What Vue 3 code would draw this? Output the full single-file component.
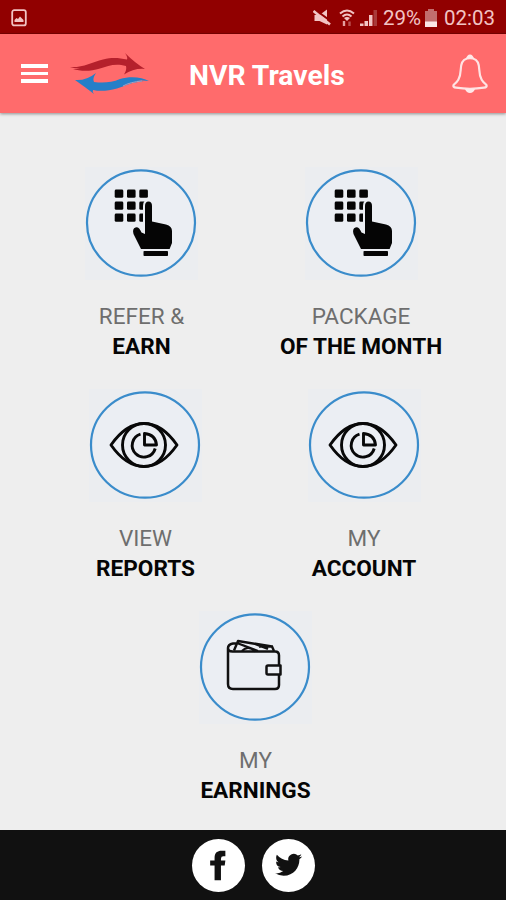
<template>
  <div class="screen">
    <!-- Android status bar -->
    <div class="status-bar">
      <svg class="status-picture" width="16" height="18" viewBox="0 0 16 18">
        <rect x="1.2" y="1.2" width="13.6" height="15.2" rx="2" fill="none" stroke="#f2c4c4" stroke-width="1.8" />
        <path d="M3.5 13V11l2-2 1.5 1 2-2.5 3.5 3.5V13z" fill="#f2c4c4" />
      </svg>
      <div class="status-right">
        <svg class="mute" width="18" height="18" viewBox="0 0 18 18">
          <path d="M1.5 6h5l7.5-5.5v15l-7.5-3.5h-5z" fill="#f2c4c4" />
          <path d="M1 0l18 13" stroke="#910000" stroke-width="2" />
          <path d="M0.5 2l16.5 13.5" stroke="#f2c4c4" stroke-width="2.6" />
        </svg>
        <svg class="wifi" width="16" height="18" viewBox="0 0 16 18">
          <path d="M1 4.5Q8-1.500 15 4.500M3.500 7.500Q8 3.500 12.500 7.500" fill="none" stroke="#f2c4c4" stroke-width="2" />
          <path d="M5 9q3-2 6 0l-3 3z" fill="#f2c4c4" />
          <path d="M5 12v5" stroke="#e4a0a0" stroke-width="2.4" fill="none" />
          <path d="M10.500 17v-4.500" stroke="#b95050" stroke-width="2.4" fill="none" />
        </svg>
        <svg class="signal" width="18" height="18" viewBox="0 0 18 18">
          <path d="M0 17v-2.500h3.500V17zM4.500 17v-5h3.500v5zM9 17V6h3.500v11z" fill="#f2c4c4" />
          <path d="M13.500 17V1H17v16z" fill="#a83a3a" />
        </svg>
        <span class="percent">29%</span>
        <svg class="battery" width="12" height="18" viewBox="0 0 12 18">
          <path d="M3 0h6v2h3v11H0V2h3z" fill="#c26d6d" />
          <path d="M0 12.500h12V18H0z" fill="#fbe6e6" />
        </svg>
        <span class="clock">02:03</span>
      </div>
    </div>

    <!-- App bar -->
    <header class="app-bar">
      <button class="menu" aria-label="Menu">
        <i></i><i></i><i></i>
      </button>
      <svg class="logo" width="80" height="42" viewBox="0 0 80 42">
        <path d="M0 14C12 15 22 9.500 33 6.500C43 4 49 5 57 6.500Q58 4 55 0Q65 10 75 16Q64 15 54 21.500Q57 17 56 13C45 10 38 13 30 15.500C19 19 10 18 3 16Q7 16 10 15.500Q5 15.500 0 14z" fill="#b5202c" />
        <path d="M5 27Q16 28 26 20Q22 26 24 29C32 30 41 30 50 26C60 23 72 24 79 28Q72 27 66 28Q71 28 75 29C63 28 56 33 47 35.500C38 38 30 38.500 23 37Q22 39 24 41Q15 34 5 27z" fill="#247fc8" />
        <path d="M53 33Q60 29 72 28" fill="none" stroke="#a2a1c2" stroke-width="1" />
      </svg>
      <h1>NVR Travels</h1>
      <svg class="bell" width="36" height="40" viewBox="0 0 36 40">
        <path d="M15 4.500C10 6 9 10 8.700 16C8.300 25 5 28 2 30.500C0.500 32.500 2 33.500 4 33.700Q18 36 32 33.700C34 33.500 35.500 32.500 34 30.500C31 28 27.700 25 27.300 16C27 10 26 6 21 4.500Q18 3.600 15 4.500z" fill="none" stroke="#ffe3e3" stroke-width="2.2" />
        <path d="M14 5Q15 0.500 18 0.500T22 5Q18 3 14 5zM13 35h10q-1.500 4-5 4t-5-4z" fill="#ffe9e9" />
      </svg>
    </header>

    <main>
      <div v-for="(row, i) in rows" :key="i" class="row" :class="'row-' + (i + 1)">
        <div v-for="tile in row" :key="tile.bold" class="tile">
          <div class="tile-image">
            <svg width="113" height="113" viewBox="0 0 113 113">
              <ellipse cx="56" cy="56" rx="54" ry="52.7" fill="#ebeef3" stroke="#3a8ccb" stroke-width="2.2" />

              <g v-if="tile.icon === 'touch'">
                <g fill="#050505">
                  <rect v-for="n in 9" :key="n" :x="29.7 + ((n - 1) % 3) * 12.3" :y="22.5 + Math.floor((n - 1) / 3) * 12" width="8.6" height="8.3" rx="1.4" />
                </g>
                <path d="M60 62V39q0-4.500 3.500-4.500T67 39v15.500l14 3q6 1.500 6 6.500v12l-4 10H58L48.500 67q-1.500-5.500 2-6.500t6 5l3.500 1.500z" fill="#050505" stroke="#ebeef3" stroke-width="4" paint-order="stroke" />
                <path d="M56 82h30v8H56z" fill="#ebeef3" />
                <rect x="58.5" y="84" width="24.5" height="5" rx="0.8" fill="#050505" />
              </g>

              <g v-else-if="tile.icon === 'eye'" fill="none" stroke="#080808" stroke-width="2.9" stroke-linejoin="round">
                <path d="M22 56Q37 34.500 55 34.500T88 56Q73 77.500 55 77.500T22 56z" />
                <circle cx="55" cy="56" r="21.5" />
                <path d="M51.500 45.200A11.700 11.700 0 1 0 66.200 59.500" />
                <path d="M55.500 44.500V56H67.500Q66.500 45.500 55.500 44.500z" />
              </g>

              <g v-else fill="none" stroke="#111" stroke-width="2.5" stroke-linejoin="round">
                <path d="M29 37V73q0 5 5 5H76q4 0 4-4V44.500q0-4-4-4H33.500q-4.500 0-4.500-3.500t5-4.500H37" />
                <path d="M35 39.500L39 30L73 35.500L75 40M38 32L59 40M43 40Q49 33.500 56 40.500M56 33L69 38M74 35.500H60" stroke-width="2.4" />
                <path d="M69 54.500h12.500v9H69q-1.500 0-1.500-1.500v-6q0-1.500 1.500-1.500z" fill="#ebeef3" />
              </g>
            </svg>
          </div>
          <div class="label">{{ tile.light }}</div>
          <div class="label bold">{{ tile.bold }}</div>
        </div>
      </div>
    </main>

    <footer>
      <a class="social" aria-label="Facebook">
        <svg width="53" height="53" viewBox="0 0 54 54">
          <path d="M23 42V27h-4.500v-5H23v-3C23 14 26 12 30 12h4v5.500H32q-2.500 0-2.500 2.500v2H34l-.7 5h-3.800v15z" fill="#111" />
        </svg>
      </a>
      <a class="social" aria-label="Twitter">
        <svg width="53" height="53" viewBox="0 0 54 54">
          <path transform="translate(13.3 12.5) scale(1.15)" d="M23.950 4.570a10 10 0 0 1-2.820.77 4.960 4.960 0 0 0 2.160-2.720c-.95.560-2 .960-3.130 1.180a4.920 4.920 0 0 0-8.380 4.480C7.690 8.090 4.070 6.130 1.640 3.160a4.820 4.820 0 0 0-.67 2.480c0 1.710.87 3.210 2.190 4.100a4.900 4.900 0 0 1-2.230-.62v.06a4.920 4.920 0 0 0 3.950 4.830 5 5 0 0 1-2.210.08 4.940 4.940 0 0 0 4.600 3.420A9.870 9.870 0 0 1 0 19.540a13.990 13.990 0 0 0 7.560 2.210c9.050 0 14-7.500 14-13.980 0-.21 0-.42-.02-.63a9.940 9.940 0 0 0 2.460-2.550z" fill="#111" />
        </svg>
      </a>
    </footer>
  </div>
</template>

<script setup>
const rows = [
  [
    { icon: 'touch', light: 'REFER &', bold: 'EARN' },
    { icon: 'touch', light: 'PACKAGE', bold: 'OF THE MONTH' }
  ],
  [
    { icon: 'eye', light: 'VIEW', bold: 'REPORTS' },
    { icon: 'eye', light: 'MY', bold: 'ACCOUNT' }
  ],
  [{ icon: 'wallet', light: 'MY', bold: 'EARNINGS' }]
]
</script>

<style>
body {
  margin: 0;
}
</style>

<style scoped>
.screen {
  display: flex;
  flex-direction: column;
  width: 506px;
  height: 900px;
  overflow: hidden;
  background: #eee;
  font-family: Roboto, "Liberation Sans", sans-serif;
}

.status-bar {
  display: flex;
  align-items: center;
  justify-content: space-between;
  box-sizing: border-box;
  flex: none;
  height: 34px;
  padding: 2px 11px 0;
  background: #910000;
  border-bottom: 1px solid #7c0000;
}

.status-right {
  display: flex;
  align-items: center;
  color: #f2c4c4;
  font-size: 20.5px;
  line-height: 32px;
}

.wifi {
  margin-left: 8px;
}

.signal {
  margin-left: 5px;
}

.percent {
  margin-left: 5px;
}

.battery {
  margin: 0 7px 0 4px;
}

.app-bar {
  display: flex;
  align-items: center;
  box-sizing: border-box;
  flex: none;
  height: 79px;
  padding: 0 18px 0 21px;
  background: #ff6b6c;
  box-shadow: 0 1px 3px rgba(0, 0, 0, 0.4);
}

.menu {
  display: flex;
  flex-direction: column;
  gap: 4px;
  width: 27px;
  padding: 0;
  border: 0;
  background: none;
}

.menu i {
  height: 3.6px;
  background: #fff;
}

.logo {
  margin-left: 22px;
}

h1 {
  flex: 1;
  margin: 4px 0 0 39px;
  color: #fff;
  font-size: 28.3px;
  font-weight: 700;
  line-height: 34px;
}

main {
  flex: none;
  box-sizing: border-box;
  height: 717px;
  padding-top: 54px;
}

.row {
  display: flex;
  box-sizing: border-box;
  height: 222px;
}

.row-1 {
  padding-left: 32px;
}

.row-2 {
  padding-left: 36px;
}

.row-3 {
  padding-left: 146px;
}

.tile {
  display: flex;
  flex-direction: column;
  align-items: center;
  width: 219px;
}

.row-1 .tile + .tile {
  width: 220px;
}

.row-2 .tile + .tile {
  width: 218px;
}

.tile-image {
  width: 113px;
  height: 113px;
  margin-bottom: 21px;
  background: #ebedf0;
}

.tile-image svg {
  display: block;
}

.label {
  color: #6e6e6e;
  font-size: 22.5px;
  font-weight: 400;
  line-height: 30px;
  white-space: nowrap;
}

.label.bold {
  color: #050505;
  font-size: 22.6px;
  font-weight: 700;
  line-height: 31px;
}

footer {
  display: flex;
  align-items: center;
  justify-content: center;
  gap: 17px;
  box-sizing: border-box;
  height: 70px;
  padding-left: 1px;
  background: #111;
}

.social {
  width: 53px;
  height: 53px;
  border-radius: 50%;
  background: #fff;
}
</style>
